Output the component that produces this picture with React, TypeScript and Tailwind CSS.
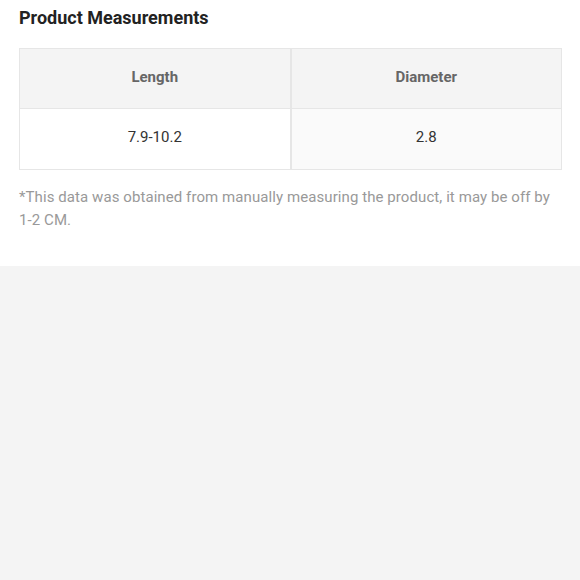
const rows = [{ length: "7.9-10.2", diameter: "2.8" }];

export default function App() {
  return (
    <div className="w-full h-screen flex flex-col bg-[#f4f4f4] font-['Roboto',sans-serif]">
      <div className="bg-white px-[19px] pt-[6px] h-[266px]">
        <h2 className="text-[18px] leading-[24px] font-bold text-[#222]">Product Measurements</h2>
        <div className="mt-[18px] grid grid-cols-2 w-[543px] border border-[#e6e6e6]">
          <div className="h-[60px] pb-[2px] flex items-center justify-center bg-[#f4f4f4] border-r border-b border-[#e6e6e6] text-[15px] font-bold text-[#666]">
            Length
          </div>
          <div className="h-[60px] pb-[2px] flex items-center justify-center bg-[#f4f4f4] border-l border-b border-[#e6e6e6] text-[15px] font-bold text-[#666]">
            Diameter
          </div>
          {rows.map((r) => (
            <>
              <div key={r.length} className="h-[60px] pb-[3px] flex items-center justify-center bg-white border-r border-[#e6e6e6] text-[15px] text-[#333]">
                {r.length}
              </div>
              <div key={r.diameter} className="h-[60px] pb-[3px] flex items-center justify-center bg-[#fafafa] border-l border-[#e6e6e6] text-[15px] text-[#333]">
                {r.diameter}
              </div>
            </>
          ))}
        </div>
        <p className="mt-[16px] text-[15px] leading-[23px] tracking-[0.08px] text-[#999]">
          *This data was obtained from manually measuring the product, it may be off by 1-2 CM.
        </p>
      </div>
    </div>
  );
}
